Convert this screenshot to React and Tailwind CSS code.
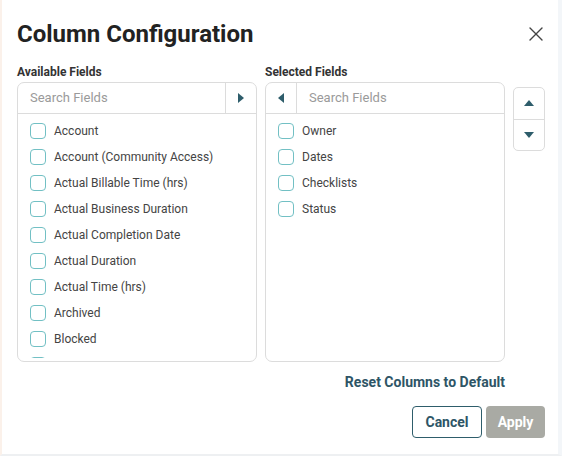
import { X } from 'lucide-react';

const available = [
  'Account',
  'Account (Community Access)',
  'Actual Billable Time (hrs)',
  'Actual Business Duration',
  'Actual Completion Date',
  'Actual Duration',
  'Actual Time (hrs)',
  'Archived',
  'Blocked',
  'Blocked Reason',
];

const selected = ['Owner', 'Dates', 'Checklists', 'Status'];

function FieldRow({ label }) {
  return (
    <li className="flex items-center h-[26px] pl-3">
      <span className="w-4 h-4 shrink-0 rounded-[4px] border-[1.5px] border-[#72c0c4] bg-white" />
      <span className="ml-2 text-[12px] text-[#444] whitespace-nowrap">{label}</span>
    </li>
  );
}

function Triangle({ dir }) {
  const pts = {
    right: '0,0 6,5 0,10',
    left: '6,0 0,5 6,10',
  }[dir];
  return (
    <svg width="6" height="10" viewBox="0 0 6 10">
      <polygon points={pts} fill="#2e5d6b" />
    </svg>
  );
}

export default function App() {
  return (
    <div
      className="w-[562px] h-[456px] bg-white border-l-2 border-l-[#fbf1ea] border-r-4 border-r-[#f3f6f9] border-b-2 border-b-[#eef0f2] overflow-hidden"
      style={{ fontFamily: 'Roboto, "Liberation Sans", sans-serif' }}
    >
      <div className="pl-[15px] pr-[10px] pt-[17px]">
        <div className="flex items-center justify-between h-[34px]">
          <h1 className="text-[24px] font-bold text-[#222] leading-none">Column Configuration</h1>
          <X size={24} strokeWidth={1.4} className="text-[#444]" />
        </div>

        <div className="flex mt-[13px] gap-2">
          <div className="w-[240px] shrink-0">
            <div className="text-[12px] font-bold text-[#333] h-[16px] leading-[16px]">Available Fields</div>
            <div className="mt-[2px] h-[280px] rounded-[7px] border border-[#dcdcdc] overflow-hidden flex flex-col">
              <div className="flex h-[31px] border-b border-[#dcdcdc] shrink-0">
                <div className="flex-1 flex items-center pl-3 text-[13px] text-[#9a9a9a]">Search Fields</div>
                <div className="w-[31px] border-l border-[#dcdcdc] flex items-center justify-center">
                  <Triangle dir="right" />
                </div>
              </div>
              <ul className="pt-[4px] h-[244px] overflow-hidden">
                {available.map((f) => (
                  <FieldRow key={f} label={f} />
                ))}
              </ul>
            </div>
          </div>

          <div className="w-[240px] shrink-0">
            <div className="text-[12px] font-bold text-[#333] h-[16px] leading-[16px]">Selected Fields</div>
            <div className="mt-[2px] h-[280px] rounded-[7px] border border-[#dcdcdc] overflow-hidden flex flex-col">
              <div className="flex h-[31px] border-b border-[#dcdcdc] shrink-0">
                <div className="w-[31px] border-r border-[#dcdcdc] flex items-center justify-center">
                  <Triangle dir="left" />
                </div>
                <div className="flex-1 flex items-center pl-3 text-[13px] text-[#9a9a9a]">Search Fields</div>
              </div>
              <ul className="pt-[4px]">
                {selected.map((f) => (
                  <FieldRow key={f} label={f} />
                ))}
              </ul>
            </div>
          </div>

          <div className="pt-[23px] shrink-0">
            <div className="w-[32px] h-[64px] rounded-[5px] border border-[#dcdcdc] flex flex-col">
              <div className="flex-1 flex items-center justify-center border-b border-[#dcdcdc]">
                <svg width="10" height="6" viewBox="0 0 10 6">
                  <polygon points="0,6 5,0 10,6" fill="#2e5d6b" />
                </svg>
              </div>
              <div className="flex-1 flex items-center justify-center">
                <svg width="10" height="6" viewBox="0 0 10 6">
                  <polygon points="0,0 10,0 5,6" fill="#2e5d6b" />
                </svg>
              </div>
            </div>
          </div>
        </div>

        <div className="w-[488px] flex justify-end mt-[10px]">
          <span className="text-[14px] font-bold text-[#2e5566]">Reset Columns to Default</span>
        </div>

        <div className="w-[528px] flex justify-end gap-[4px] mt-[13px]">
          <button className="h-[32px] w-[70px] rounded-[4px] border-[1.5px] border-[#2e5d6b] text-[14px] font-bold text-[#2e5566] bg-white">
            Cancel
          </button>
          <button className="h-[32px] w-[59px] rounded-[4px] bg-[#a9aaa4] text-[14px] font-bold text-white">
            Apply
          </button>
        </div>
      </div>
    </div>
  );
}
